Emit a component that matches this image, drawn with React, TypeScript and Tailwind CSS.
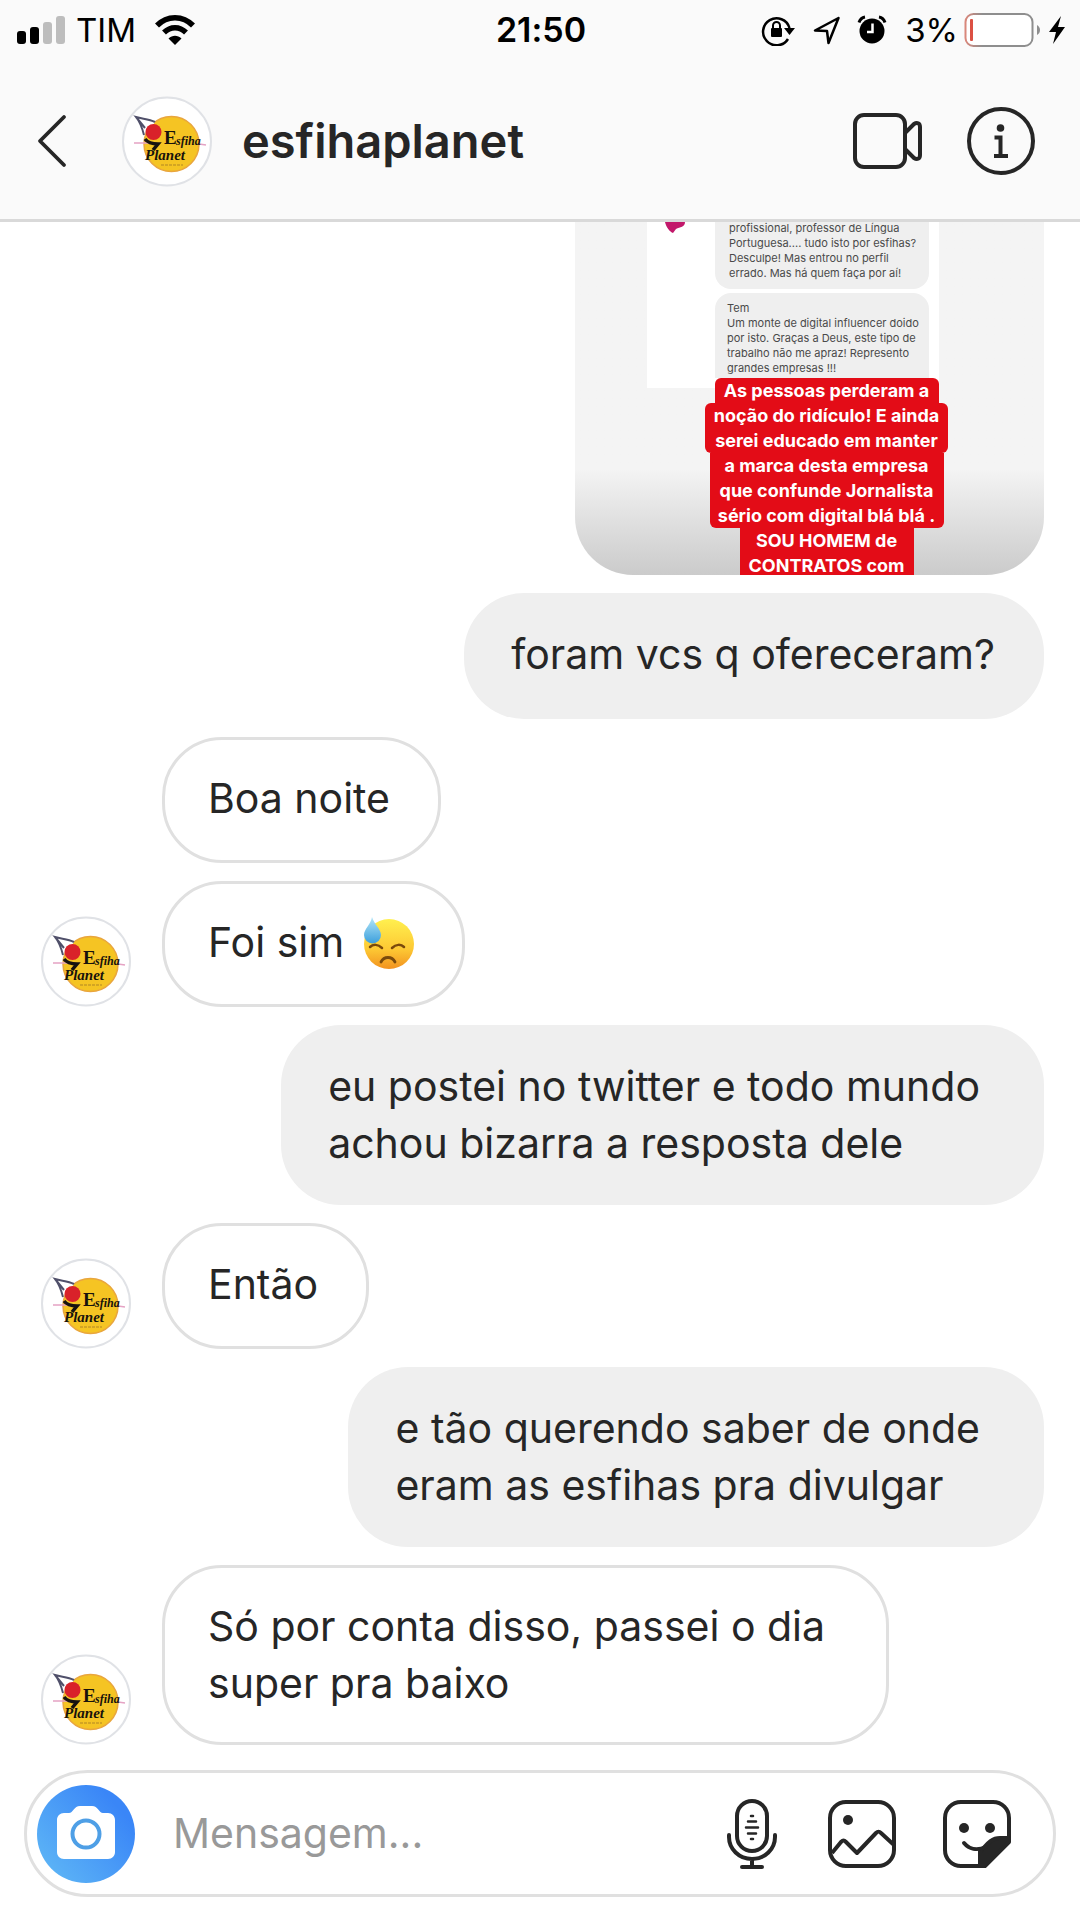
import React from "react";

function Avatar() {
  return (
    <svg viewBox="0 0 90 91" className="h-[91px] w-[90px] shrink-0" role="img" aria-label="Esfiha Planet">
      <circle cx="45" cy="45.500" r="44" fill="#fff" stroke="#e0e2e6" strokeWidth="2" />
      <circle cx="49.500" cy="48" r="27.500" fill="#f5c423" stroke="#e9a63e" strokeWidth="1.500" />
      <path d="M14 21c7 2 13 2 19 5l-8 12Z" fill="#fff" />
      <path d="M22 39C20 31 18 26 14 21c7 2 13 2 19 5M14 21l9 11" fill="none" stroke="#50506a" strokeWidth="2" />
      <path d="M12 47h20M77 48l7 1" stroke="#e5a3c4" strokeWidth="1.500" />
      <circle cx="31.500" cy="36" r="8" fill="#d9222a" />
      <path d="M23 43c3 4 8 5 13 5l-5 6" fill="none" stroke="#171310" strokeWidth="3.500" />
      <g fill="#17120c" fontFamily="Liberation Serif, serif">
        <text x="42" y="48" fontSize="19" fontWeight="bold">
          E
        </text>
        <text x="54" y="49" fontSize="12" fontStyle="italic" fontWeight="bold">
          sfiha
        </text>
        <text x="23" y="64" fontSize="15" fontStyle="italic" fontWeight="bold">
          Planet
        </text>
      </g>
      <path d="M39 69h22" stroke="#c79a24" strokeWidth="1.500" strokeDasharray="3 1" />
    </svg>
  );
}

function SweatFace() {
  return (
    <svg viewBox="0 0 52 54" className="h-[54px] w-[52px]" role="img" aria-label="rosto com gota de suor">
      <defs>
        <linearGradient id="face" x1="0" y1="0" x2="0" y2="1">
          <stop offset="0" stopColor="#fff04f" />
          <stop offset="0.600" stopColor="#fdc934" />
          <stop offset="1" stopColor="#f29220" />
        </linearGradient>
        <linearGradient id="drop" x1="0" y1="0" x2="0" y2="1">
          <stop offset="0" stopColor="#b4e6f8" />
          <stop offset="1" stopColor="#3c9fdc" />
        </linearGradient>
      </defs>
      <circle cx="27" cy="28" r="25" fill="url(#face)" />
      <path d="M8 31c3-3 8-3 12 1M30 32c4-4 9-4 12-1" fill="none" stroke="#7a4a0c" strokeWidth="2.500" strokeLinecap="round" />
      <path d="M19 46c3-6 11-6 14 0" fill="none" stroke="#7a4a0c" strokeWidth="2.800" strokeLinecap="round" />
      <path d="M10 1c2 7 9 12 9 18a8.500 8.500 0 0 1-17 0C2 13 9 8 10 1Z" fill="url(#drop)" />
    </svg>
  );
}

function StatusBar() {
  return (
    <div className="flex h-[59px] items-center pr-3.5 pl-4 text-black">
      <div className="flex flex-1 items-center">
        <svg viewBox="0 0 50 30" className="h-[30px] w-[50px]" aria-hidden="true">
          <rect x="1" y="16" width="9" height="13" rx="3" />
          <rect x="14" y="12" width="9" height="17" rx="3" />
          <rect x="27" y="7" width="9" height="22" rx="3" fill="#bdbdbd" />
          <rect x="40" y="1" width="9" height="28" rx="3" fill="#bdbdbd" />
        </svg>
        <span className="ml-2.5 text-[33px] leading-10">TIM</span>
        <svg viewBox="0 0 42 32" className="ml-[18px] h-8 w-[42px]" aria-hidden="true" fill="none" stroke="#000" strokeWidth="5.500">
          <path d="M3 11.500c10-10.500 26-10.500 36 0M10 18.500c6.500-6.500 15.500-6.500 22 0" />
          <path d="M21 31l-6.500-6.500c4-3.600 9-3.600 13 0Z" fill="#000" stroke="none" />
        </svg>
      </div>
      <time className="text-[34px] leading-10 font-semibold">21:50</time>
      <div className="flex flex-1 items-center justify-end">
        <svg viewBox="0 0 34 32" className="h-8 w-[34px]" aria-hidden="true">
          <path d="M27 25a13.500 13.500 0 1 1 1.500-11" fill="none" stroke="#000" strokeWidth="2.500" />
          <path d="M23 14h11l-5.500 7Z" />
          <rect x="10" y="14" width="11" height="9" rx="1" />
          <path d="M12 15v-3.500a3.500 3.500 0 0 1 7 0V15" fill="none" stroke="#000" strokeWidth="2" />
        </svg>
        <svg viewBox="0 0 28 30" className="ml-[18px] h-[30px] w-7" aria-hidden="true">
          <path d="M25.500 3 2 15.500l12 .5 1.500 12Z" fill="none" stroke="#000" strokeWidth="2.500" strokeLinejoin="round" />
        </svg>
        <svg viewBox="0 0 30 30" className="ml-4 h-[30px] w-[30px]" aria-hidden="true">
          <circle cx="15" cy="16" r="12.500" />
          <path d="M2 7.500c1-3 3-5 6-5.500M28 7.500c-1-3-3-5-6-5.500" fill="none" stroke="#000" strokeWidth="3" />
          <path d="M15.500 8.500V17H10" fill="none" stroke="#fff" strokeWidth="2.500" />
        </svg>
        <span className="ml-[18px] text-[33px] leading-10">3%</span>
        <svg viewBox="0 0 78 36" className="ml-1.5 h-9 w-[78px]" aria-label="Bateria 3%" role="img">
          <defs>
            <linearGradient id="battery">
              <stop offset="0" stopColor="#d9877b" />
              <stop offset="0.250" stopColor="#8e8e8e" />
            </linearGradient>
          </defs>
          <rect x="1.500" y="2" width="67" height="32" rx="8" fill="#fff" stroke="url(#battery)" strokeWidth="2" />
          <rect x="6" y="7" width="3" height="22" rx="1" fill="#dc5043" />
          <path d="M73 13c4 2 4 8 0 10Z" fill="#8e8e8e" />
        </svg>
        <svg viewBox="0 0 18 28" className="ml-1.5 h-7 w-[18px]" aria-hidden="true">
          <path d="M13 0 1 16h7L5 28 17 11h-7Z" />
        </svg>
      </div>
    </div>
  );
}

function Header() {
  return (
    <header className="border-b-[3px] border-[#d9d9d9] bg-[#fafafa]">
      <StatusBar />
      <div className="flex h-40 items-center pt-1 pr-11 pl-[35px] text-[#262626]">
        <button type="button" aria-label="Voltar" className="mr-[53px]">
          <svg viewBox="0 0 34 54" className="h-[54px] w-[34px]">
            <path d="M29 3 5 27l24 24" fill="none" stroke="currentColor" strokeWidth="3.800" strokeLinecap="round" strokeLinejoin="round" />
          </svg>
        </button>
        <Avatar />
        <h1 className="ml-[30px] text-[47px] leading-[56px] font-semibold">esfihaplanet</h1>
        <button type="button" aria-label="Chamada de vídeo" className="ml-auto">
          <svg viewBox="0 0 70 56" className="h-14 w-[70px]" fill="none" stroke="currentColor" strokeWidth="4" strokeLinejoin="round">
            <rect x="2" y="2" width="50" height="52" rx="9" />
            <path d="M52 20 61 11c3-2 6-1 6 3v28c0 4-3 5-6 3L52 36" />
          </svg>
        </button>
        <button type="button" aria-label="Informações" className="ml-[43px]">
          <svg viewBox="0 0 70 70" className="h-[70px] w-[70px]">
            <circle cx="35" cy="35" r="32" fill="none" stroke="currentColor" strokeWidth="4" />
            <circle cx="34.500" cy="22" r="3.800" fill="currentColor" />
            <path d="M30.500 31.500h4V50M30 50h10" fill="none" stroke="currentColor" strokeWidth="4" strokeLinecap="square" />
          </svg>
        </button>
      </div>
    </header>
  );
}

function SharedPicture() {
  return (
    <figure className="mr-9 flex h-[353px] w-[469px] flex-col self-end overflow-hidden rounded-b-[58px] bg-linear-to-b from-[#f4f4f4] from-70% to-[#cbcbcb]">
      <div className="ml-[72px] flex h-[166px] w-[292px] shrink-0 items-start bg-white">
        <svg viewBox="0 0 20 12" className="ml-[18px] h-3 w-5 shrink-0" aria-hidden="true">
          <path d="M0 0h20c0 5-5 5-9 7l-3 4C5 10 1 5 0 0Z" fill="#c2186b" />
        </svg>
        <div className="ml-[30px] flex h-[156px] w-[214px] flex-col justify-end gap-1 text-[11px] leading-[15px] whitespace-nowrap text-[#4a4a4a]">
          <p className="shrink-0 rounded-b-2xl bg-[#efefef] pb-2 pl-3.5">
            profissional, professor de Língua
            <br />
            Portuguesa.... tudo isto por esfihas?
            <br />
            Desculpe! Mas entrou no perfil
            <br />
            errado. Mas há quem faça por aí!
          </p>
          <p className="shrink-0 rounded-t-2xl bg-[#efefef] pt-2 pb-0.5 pl-3">
            Tem
            <br />
            Um monte de digital influencer doido
            <br />
            por isto. Graças a Deus, este tipo de
            <br />
            trabalho não me apraz! Represento
            <br />
            grandes empresas !!!
          </p>
        </div>
      </div>
      <figcaption className="-mt-2.5 ml-[130px] flex w-[243px] shrink-0 flex-col items-center text-center text-[18px] leading-[25px] font-bold whitespace-nowrap text-white">
        <span className="w-[224px] rounded-t-md bg-[#e30c17]">As pessoas perderam a</span>
        <span className="w-full rounded-md bg-[#e30c17]">
          noção do ridículo! E ainda
          <br />
          serei educado em manter
        </span>
        <span className="w-[234px] rounded-b-md bg-[#e30c17]">
          a marca desta empresa
          <br />
          que confunde Jornalista
          <br />
          sério com digital blá blá .
        </span>
        <span className="w-[174px] bg-[#e30c17]">
          SOU HOMEM de
          <br />
          CONTRATOS com
        </span>
      </figcaption>
    </figure>
  );
}

function Sent({ children, long = false }: { children: React.ReactNode; long?: boolean }) {
  return (
    <p
      className={
        long
          ? "mr-9 self-end rounded-[60px] bg-[#efefef] py-[33px] pr-16 pl-[47px]"
          : "mr-9 self-end rounded-[60px] bg-[#efefef] pt-[33px] pr-[49px] pb-9 pl-[47px]"
      }
    >
      {children}
    </p>
  );
}

function Received({
  children,
  avatar = false,
  long = false,
}: {
  children: React.ReactNode;
  avatar?: boolean;
  long?: boolean;
}) {
  return (
    <div className="ml-[41px] flex items-end">
      <div className="mr-[31px] w-[90px] shrink-0">{avatar && <Avatar />}</div>
      <p
        className={
          long
            ? "rounded-[60px] border-[3px] border-[#e0e0e0] bg-white py-[30px] pr-[61px] pl-[43px]"
            : "rounded-[60px] border-[3px] border-[#e0e0e0] bg-white pt-[30px] pr-12 pb-[33px] pl-[43px]"
        }
      >
        {children}
      </p>
    </div>
  );
}

function Composer() {
  return (
    <form className="mx-6 mt-[25px] flex h-[127px] items-center rounded-full border-[3px] border-[#e0e0e0] bg-white pr-[41px] pl-2.5 text-[#262626]">
      <button type="button" aria-label="Câmera">
        <svg viewBox="0 0 98 98" className="h-[98px] w-[98px]">
          <defs>
            <linearGradient id="camera" x1="0.150" y1="0.850" x2="0.850" y2="0.250">
              <stop offset="0" stopColor="#5ab1f6" />
              <stop offset="1" stopColor="#3a86f7" />
            </linearGradient>
          </defs>
          <circle cx="49" cy="49" r="49" fill="url(#camera)" />
          <path d="M27 28h5c4 0 5-7 11-7h12c6 0 7 7 11 7h5c4 0 7 3 7 7v32c0 4-3 7-7 7H27c-4 0-7-3-7-7V35c0-4 3-7 7-7Z" fill="#fff" />
          <circle cx="49" cy="49" r="13.500" fill="#fff" stroke="#4e9fe6" strokeWidth="4" />
        </svg>
      </button>
      <input
        type="text"
        aria-label="Mensagem"
        placeholder="Mensagem..."
        className="ml-[38px] min-w-0 flex-1 bg-transparent text-[41px] leading-[57px] outline-none placeholder:text-[#999999]"
      />
      <button type="button" aria-label="Mensagem de voz">
        <svg viewBox="0 0 52 72" className="h-[72px] w-[52px]" fill="none" stroke="currentColor" strokeWidth="4" strokeLinecap="round">
          <rect x="11" y="3" width="30" height="50" rx="15" />
          <path d="M3 37v2c0 12 10 22 23 22s23-10 23-22v-2M26 61v8M16 69h20" />
          <path d="M25 18h2M22 23.500h8M20 29.500h12M22 35.500h8M25 41h2" strokeWidth="2.500" />
        </svg>
      </button>
      <button type="button" aria-label="Galeria" className="ml-[49px]">
        <svg viewBox="0 0 70 70" className="h-[70px] w-[70px]" fill="none" stroke="currentColor" strokeWidth="4" strokeLinejoin="round">
          <rect x="3" y="3" width="64" height="64" rx="16" />
          <path d="M5 54 14 43c2-2 3-2 5 0l11 11L49 34c2-2 3-2 5 0l13 12" />
          <circle cx="21" cy="21" r="5" fill="currentColor" stroke="none" />
        </svg>
      </button>
      <button type="button" aria-label="Figurinhas" className="ml-[45px]">
        <svg viewBox="0 0 70 70" className="h-[70px] w-[70px]" fill="none" stroke="currentColor" strokeWidth="4" strokeLinejoin="round" strokeLinecap="round">
          <path d="M38 67H19C10 67 3 60 3 51V19C3 10 10 3 19 3h32c9 0 16 7 16 16v20" />
          <path d="M67 39v4L43 67h-5V52c4-1 8-13 20-13Z" fill="currentColor" />
          <circle cx="22" cy="29" r="5" fill="currentColor" stroke="none" />
          <circle cx="48" cy="29" r="5" fill="currentColor" stroke="none" />
          <path d="M22 44c5 6 13 8 22 4" />
        </svg>
      </button>
    </form>
  );
}

export default function App() {
  return (
    <div className="min-h-screen bg-white font-[Inter,sans-serif] [font-variant-ligatures:none]">
      <Header />
      <main className="flex flex-col gap-[18px] text-[41px] leading-[57px] text-[#262626]">
        <SharedPicture />
        <Sent>foram vcs q ofereceram?</Sent>
        <Received>Boa noite</Received>
        <Received avatar>
          <span className="flex items-center gap-[18px]">
            Foi sim
            <span className="flex h-[57px] items-center">
              <SweatFace />
            </span>
          </span>
        </Received>
        <Sent long>
          eu postei no twitter e todo mundo
          <br />
          achou bizarra a resposta dele
        </Sent>
        <Received avatar>Então</Received>
        <Sent long>
          e tão querendo saber de onde
          <br />
          eram as esfihas pra divulgar
        </Sent>
        <Received avatar long>
          Só por conta disso, passei o dia
          <br />
          super pra baixo
        </Received>
      </main>
      <Composer />
    </div>
  );
}
